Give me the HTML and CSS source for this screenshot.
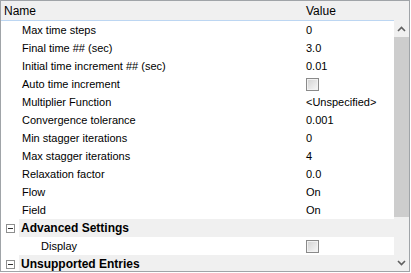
FILE: index.html
```html
<!DOCTYPE html>
<html lang="en">
<head>
  <meta charset="UTF-8">
  <title>Property Grid</title>
  <link rel="stylesheet" href="styles.css">
</head>
<body>
  <div class="grid">
    <div class="head">
      <span class="head-name">Name</span>
      <span class="head-value">Value</span>
    </div>
    <div class="body">
      <div class="rows">
        <div class="row"><span class="name">Max time steps</span><span class="value">0</span></div>
        <div class="row"><span class="name">Final time ## (sec)</span><span class="value">3.0</span></div>
        <div class="row"><span class="name">Initial time increment ## (sec)</span><span class="value">0.01</span></div>
        <div class="row"><span class="name">Auto time increment</span><span class="value"><span class="check"></span></span></div>
        <div class="row"><span class="name">Multiplier Function</span><span class="value">&lt;Unspecified&gt;</span></div>
        <div class="row"><span class="name">Convergence tolerance</span><span class="value">0.001</span></div>
        <div class="row"><span class="name">Min stagger iterations</span><span class="value">0</span></div>
        <div class="row"><span class="name">Max stagger iterations</span><span class="value">4</span></div>
        <div class="row"><span class="name">Relaxation factor</span><span class="value">0.0</span></div>
        <div class="row"><span class="name">Flow</span><span class="value">On</span></div>
        <div class="row"><span class="name">Field</span><span class="value">On</span></div>
        <div class="group">
          <span class="toggle"><span class="minus"></span></span>
          <span class="group-title">Advanced Settings</span>
        </div>
        <div class="row sub"><span class="name">Display</span><span class="value"><span class="check"></span></span></div>
        <div class="group">
          <span class="toggle"><span class="minus"></span></span>
          <span class="group-title">Unsupported Entries</span>
        </div>
      </div>
      <div class="scrollbar">
        <div class="arrow">
          <svg width="9" height="6" viewBox="0 0 9 6"><path d="M1 5 L4.5 1.5 L8 5" fill="none" stroke="#606060" stroke-width="1.6"/></svg>
        </div>
        <div class="track">
          <div class="thumb"></div>
        </div>
        <div class="arrow">
          <svg width="9" height="6" viewBox="0 0 9 6"><path d="M1 1 L4.5 4.5 L8 1" fill="none" stroke="#606060" stroke-width="1.6"/></svg>
        </div>
      </div>
    </div>
  </div>
</body>
</html>
```
FILE: styles.css
```css
/* Reset */
* {
  margin: 0;
  padding: 0;
  box-sizing: border-box;
}
body {
  font-family: "Liberation Sans", Arial, sans-serif;
  font-size: 11px;
  color: #000;
  background: #fff;
}

/* Frame */
.grid {
  width: 410px;
  height: 272px;
  border: 1px solid #a0a4a8;
  background: #f0f0f0;
  display: flex;
  flex-direction: column;
  overflow: hidden;
}

/* Header */
.head {
  height: 19px;
  display: flex;
  align-items: center;
  font-size: 12px;
}
.head-name {
  width: 305px;
  padding-left: 3px;
}
.head-value {
  padding-left: 0;
}

/* Body */
.body {
  flex: 1;
  display: flex;
  min-height: 0;
}
.rows {
  width: 393px;
  background: #fff;
  border-top: 1px solid #bcd6f2;
  overflow: hidden;
}
.row {
  height: 18px;
  display: flex;
  align-items: center;
}
.name {
  width: 305px;
  padding-left: 21px;
  white-space: nowrap;
}
.row.sub .name {
  padding-left: 40px;
}
.value {
  display: flex;
  align-items: center;
}

/* Checkbox */
.check {
  width: 13px;
  height: 13px;
  border: 1px solid #8a8a8a;
  background: linear-gradient(135deg, #d2d2d2, #f8f8f8);
  box-shadow: inset 0 0 0 1px #f2f2f2;
}

/* Groups */
.group {
  height: 18px;
  display: flex;
}
.toggle {
  width: 18px;
  display: flex;
  align-items: center;
  justify-content: center;
  background: #fff;
}
.minus {
  width: 9px;
  height: 9px;
  border: 1px solid #8e8f8f;
  position: relative;
  background: #fff;
}
.minus::after {
  content: "";
  position: absolute;
  left: 1px;
  top: 3px;
  width: 5px;
  height: 1px;
  background: #303030;
}
.group-title {
  flex: 1;
  background: #f0f0f0;
  font-weight: bold;
  font-size: 12px;
  display: flex;
  align-items: center;
  padding-left: 2px;
}

/* Scrollbar */
.scrollbar {
  width: 15px;
  display: flex;
  flex-direction: column;
  background: #f0f0f0;
}
.arrow {
  height: 17px;
  display: flex;
  align-items: center;
  justify-content: center;
}
.track {
  flex: 1;
  padding-top: 0;
}
.thumb {
  margin-top: 0;
  height: 180px;
  background: #cdcdcd;
}
```
